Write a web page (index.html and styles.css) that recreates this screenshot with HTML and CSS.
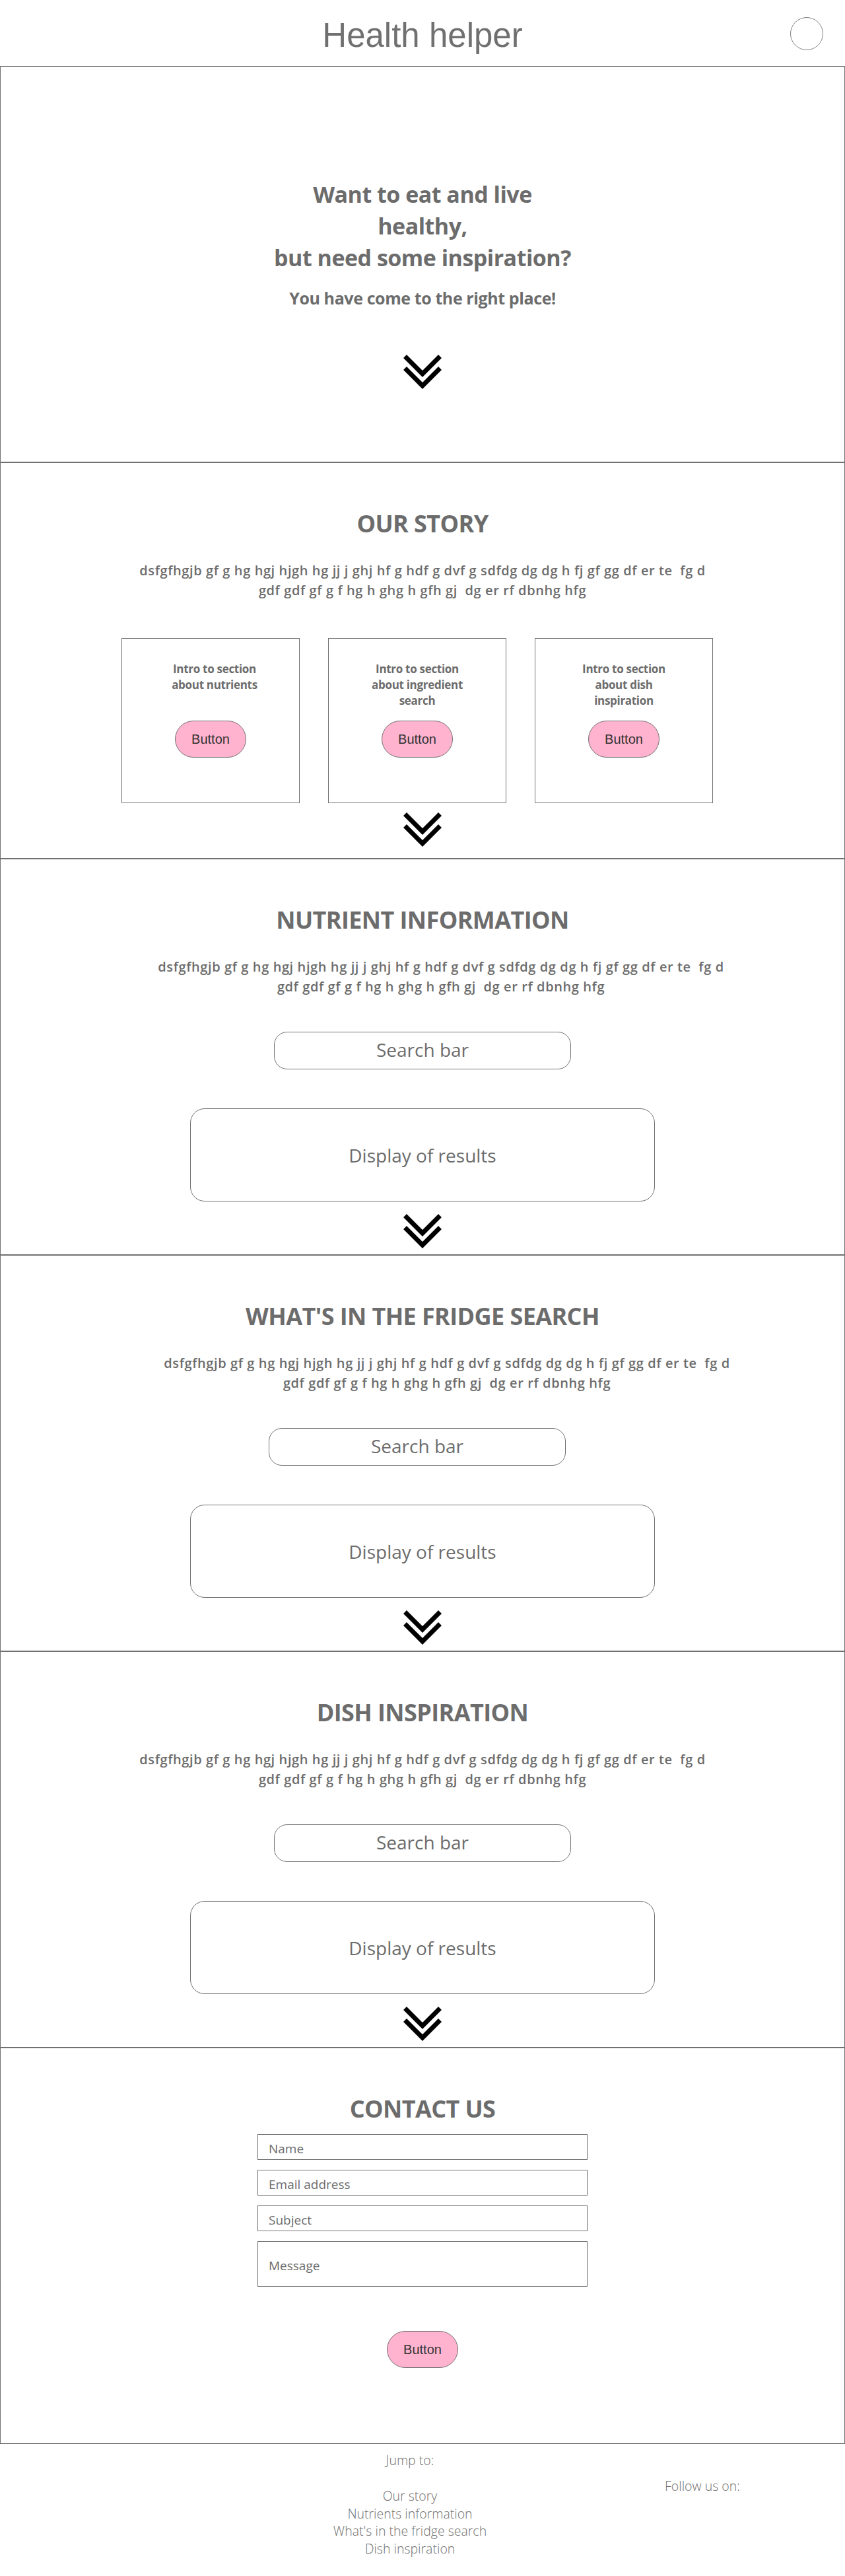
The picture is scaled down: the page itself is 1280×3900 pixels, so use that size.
FILE: index.html
```html
<!DOCTYPE html>
<html lang="en">
<head>
<meta charset="utf-8">
<title>Health helper</title>
<link rel="stylesheet" href="styles.css">
</head>
<body>
<header class="topbar">
  <div class="topbar-side"></div>
  <h1 class="brand">Health helper</h1>
  <div class="topbar-side topbar-right"><span class="avatar"></span></div>
</header>

<main>
  <section class="panel hero">
    <h2 class="hero-title">Want to eat and live<br>healthy,<br>but need some inspiration?</h2>
    <p class="hero-sub">You have come to the right place!</p>
    <svg class="chev chev-hero" viewBox="0 0 58 53" width="58" height="53" aria-hidden="true"><path d="M2.5 2.5 L29 29 L55.5 2.5 M2.5 20.5 L29 47 L55.5 20.5" fill="none" stroke="#000" stroke-width="7"/></svg>
  </section>

  <section class="panel story">
    <h2 class="panel-title">OUR STORY</h2>
    <p class="panel-text">dsfgfhgjb gf g hg hgj hjgh hg jj j ghj hf g hdf g dvf g sdfdg dg dg h fj gf gg df er te &nbsp;fg d<br>gdf gdf gf g f hg h ghg h gfh gj &nbsp;dg er rf dbnhg hfg</p>
    <div class="cards">
      <div class="card">
        <p class="card-text card-text-first">Intro to section<br>about nutrients</p>
        <button class="pill">Button</button>
      </div>
      <div class="card">
        <p class="card-text">Intro to section<br>about ingredient<br>search</p>
        <button class="pill">Button</button>
      </div>
      <div class="card">
        <p class="card-text">Intro to section<br>about dish<br>inspiration</p>
        <button class="pill">Button</button>
      </div>
    </div>
    <svg class="chev chev-story" viewBox="0 0 58 53" width="58" height="53" aria-hidden="true"><path d="M2.5 2.5 L29 29 L55.5 2.5 M2.5 20.5 L29 47 L55.5 20.5" fill="none" stroke="#000" stroke-width="7"/></svg>
  </section>

  <section class="panel">
    <h2 class="panel-title">NUTRIENT INFORMATION</h2>
    <p class="panel-text shift-a">dsfgfhgjb gf g hg hgj hjgh hg jj j ghj hf g hdf g dvf g sdfdg dg dg h fj gf gg df er te &nbsp;fg d<br>gdf gdf gf g f hg h ghg h gfh gj &nbsp;dg er rf dbnhg hfg</p>
    <div class="search">Search bar</div>
    <div class="results">Display of results</div>
    <svg class="chev chev-search" viewBox="0 0 58 53" width="58" height="53" aria-hidden="true"><path d="M2.5 2.5 L29 29 L55.5 2.5 M2.5 20.5 L29 47 L55.5 20.5" fill="none" stroke="#000" stroke-width="7"/></svg>
  </section>

  <section class="panel">
    <h2 class="panel-title">WHAT'S IN THE FRIDGE SEARCH</h2>
    <p class="panel-text shift-b">dsfgfhgjb gf g hg hgj hjgh hg jj j ghj hf g hdf g dvf g sdfdg dg dg h fj gf gg df er te &nbsp;fg d<br>gdf gdf gf g f hg h ghg h gfh gj &nbsp;dg er rf dbnhg hfg</p>
    <div class="search search-left">Search bar</div>
    <div class="results">Display of results</div>
    <svg class="chev chev-search" viewBox="0 0 58 53" width="58" height="53" aria-hidden="true"><path d="M2.5 2.5 L29 29 L55.5 2.5 M2.5 20.5 L29 47 L55.5 20.5" fill="none" stroke="#000" stroke-width="7"/></svg>
  </section>

  <section class="panel">
    <h2 class="panel-title">DISH INSPIRATION</h2>
    <p class="panel-text">dsfgfhgjb gf g hg hgj hjgh hg jj j ghj hf g hdf g dvf g sdfdg dg dg h fj gf gg df er te &nbsp;fg d<br>gdf gdf gf g f hg h ghg h gfh gj &nbsp;dg er rf dbnhg hfg</p>
    <div class="search">Search bar</div>
    <div class="results">Display of results</div>
    <svg class="chev chev-search" viewBox="0 0 58 53" width="58" height="53" aria-hidden="true"><path d="M2.5 2.5 L29 29 L55.5 2.5 M2.5 20.5 L29 47 L55.5 20.5" fill="none" stroke="#000" stroke-width="7"/></svg>
  </section>

  <section class="panel contact">
    <h2 class="panel-title">CONTACT US</h2>
    <form class="form">
      <div class="field">Name</div>
      <div class="field">Email address</div>
      <div class="field">Subject</div>
      <div class="field field-msg">Message</div>
    </form>
    <button class="pill pill-contact">Button</button>
  </section>
</main>

<footer class="footer">
  <div></div>
  <nav class="jump">
    <div class="jump-label">Jump to:</div>
    <ul class="jump-list">
      <li><a href="#">Our story</a></li>
      <li><a href="#">Nutrients information</a></li>
      <li><a href="#">What's in the fridge search</a></li>
      <li><a href="#">Dish inspiration</a></li>
    </ul>
  </nav>
  <div class="follow">Follow us on:</div>
</footer>
</body>
</html>
```

FILE: styles.css
```css
* { box-sizing: border-box; }

html, body {
  margin: 0;
  padding: 0;
  background: #ffffff;
}

body {
  width: 1280px;
  font-family: "Open Sans", "Noto Sans", sans-serif;
  color: #6c6c6c;
}

/* header */
.topbar {
  height: 100px;
  display: grid;
  grid-template-columns: 1fr auto 1fr;
  align-items: start;
  padding-top: 26px;
}

.brand {
  margin: 2px 0 0;
  font-family: "Liberation Sans", Arial, sans-serif;
  font-weight: 400;
  font-size: 51px;
  line-height: 51px;
  color: #707070;
}

.topbar-right {
  display: flex;
  justify-content: flex-end;
  padding-right: 33px;
}

.avatar {
  display: block;
  width: 50px;
  height: 50px;
  border: 1px solid #808080;
  border-radius: 50%;
}

/* panels */
.panel {
  height: 600px;
  border: 1px solid #707070;
  display: flex;
  flex-direction: column;
  align-items: center;
  padding-top: 68px;
}

.hero { padding-top: 169px; }

.hero-title {
  margin: 0;
  font-size: 34px;
  line-height: 48px;
  font-weight: 700;
  letter-spacing: -0.5px;
  text-align: center;
}

.hero-sub {
  margin: 20px 0 0;
  font-size: 25px;
  line-height: 34px;
  font-weight: 700;
  letter-spacing: -0.4px;
  text-align: center;
}

.chev { display: block; flex: none; }
.chev-hero { margin-top: 69px; }
.chev-story { margin-top: 14px; }
.chev-search { margin-top: 19px; }

.panel-title {
  margin: 0;
  font-size: 36px;
  line-height: 48px;
  font-weight: 700;
  letter-spacing: -0.6px;
  text-align: center;
}

.panel-text {
  width: 100%;
  margin: 32px 0 0;
  font-size: 20px;
  line-height: 30px;
  font-weight: 600;
  letter-spacing: 0.6px;
  text-align: center;
}

.shift-a { padding-left: 56px; }
.shift-b { padding-left: 74px; }

/* cards */
.cards {
  display: flex;
  gap: 43px;
  margin: 57px 16px 0 0;
}

.card {
  width: 270px;
  height: 250px;
  border: 1px solid #707070;
  display: flex;
  flex-direction: column;
  align-items: center;
  padding-top: 34px;
}

.card-text {
  margin: 0;
  height: 72px;
  font-size: 17px;
  line-height: 24px;
  font-weight: 700;
  letter-spacing: -0.3px;
  text-align: center;
}

.card-text-first { padding-left: 12px; }

.pill {
  display: block;
  width: 108px;
  height: 56px;
  margin-top: 18px;
  padding: 0;
  border: 1px solid #707070;
  border-radius: 28px;
  background: #ffb3cf;
  font-family: "Liberation Sans", Arial, sans-serif;
  font-size: 20px;
  color: #333333;
}

/* search */
.search {
  width: 450px;
  height: 57px;
  margin-top: 53px;
  border: 1px solid #707070;
  border-radius: 20px;
  display: flex;
  align-items: center;
  justify-content: center;
  padding-bottom: 3px;
  font-size: 28px;
}

.search-left { margin-right: 16px; }

.results {
  width: 704px;
  height: 141px;
  margin-top: 59px;
  border: 1px solid #707070;
  border-radius: 22px;
  display: flex;
  align-items: center;
  justify-content: center;
  font-size: 28px;
}

/* contact */
.form {
  width: 500px;
  margin: 14px 0 0;
  display: flex;
  flex-direction: column;
  gap: 15px;
}

.field {
  height: 39px;
  border: 1px solid #707070;
  display: flex;
  align-items: center;
  padding: 4px 0 0 16px;
  font-size: 19px;
}

.field-msg { height: 69px; }

.pill-contact { margin-top: 67px; }

/* footer */
.footer {
  height: 200px;
  display: grid;
  grid-template-columns: 421px 400px 1fr;
  font-weight: 300;
  font-size: 19.5px;
  line-height: 26.5px;
  color: #707070;
}

.jump {
  padding-top: 12px;
  text-align: center;
}

.jump-list {
  list-style: none;
  margin: 27.5px 0 0;
  padding: 0;
}

.jump-list a {
  color: inherit;
  text-decoration: none;
}

.follow {
  padding: 51px 0 0 27px;
  text-align: center;
}
```
